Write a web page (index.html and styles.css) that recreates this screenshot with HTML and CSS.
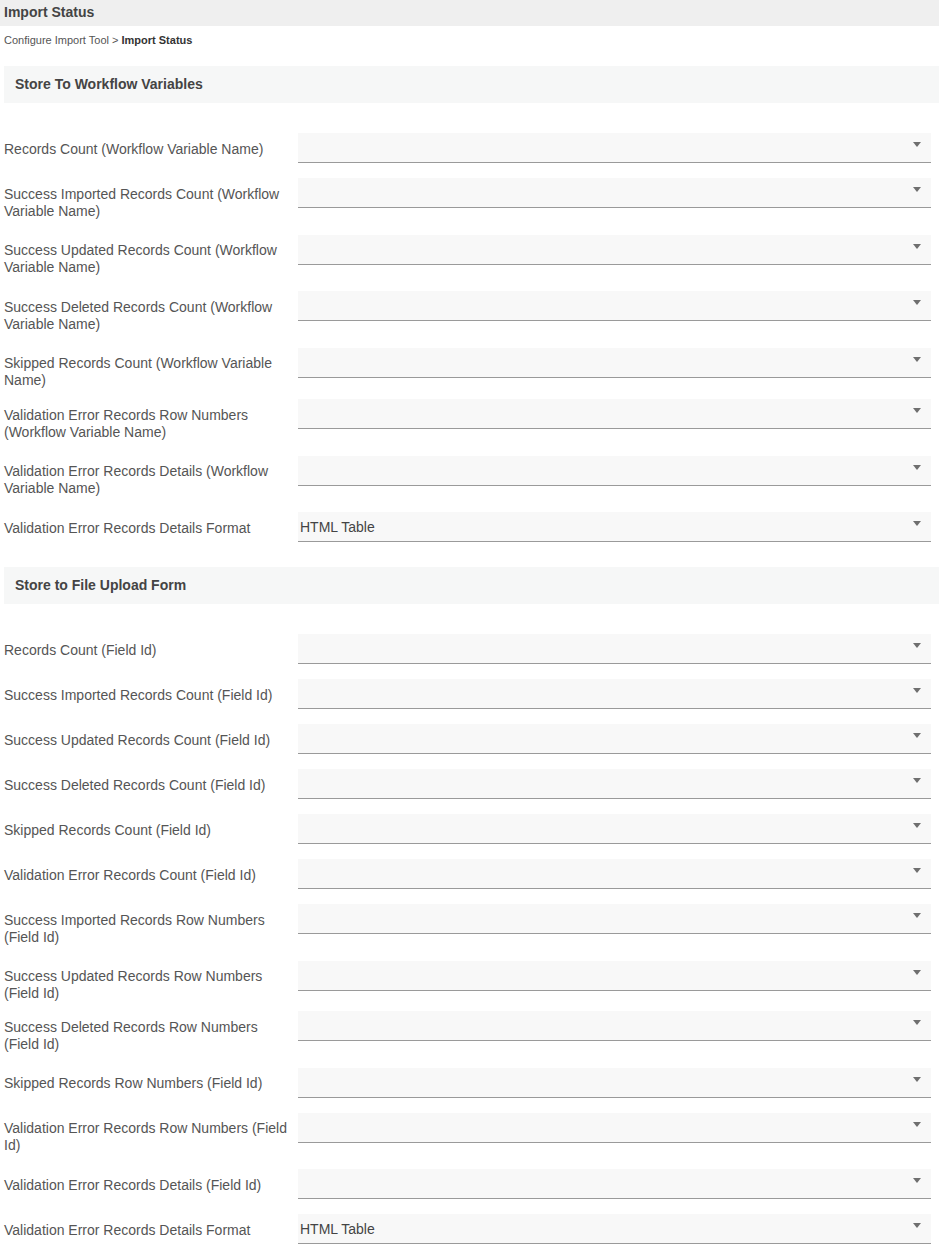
FILE: index.html
```html
<!DOCTYPE html>
<html lang="en">
<head>
    <meta charset="UTF-8">
    <meta name="viewport" content="width=device-width, initial-scale=1.0">
    <title>Import Status</title>
    <link rel="stylesheet" href="styles.css">
</head>
<body>
    <div class="page-title">Import Status</div>
    <div class="breadcrumb">Configure Import Tool &gt; <strong>Import Status</strong></div>

    <div class="section">
        <div class="section-title">Store To Workflow Variables</div>
        <div class="fields">
            <div class="field-row">
                <label class="field-label">Records Count (Workflow Variable Name)</label>
                <div class="select-wrap"><select class="select"><option></option></select></div>
            </div>
            <div class="field-row">
                <label class="field-label">Success Imported Records Count (Workflow Variable Name)</label>
                <div class="select-wrap"><select class="select"><option></option></select></div>
            </div>
            <div class="field-row">
                <label class="field-label">Success Updated Records Count (Workflow Variable Name)</label>
                <div class="select-wrap"><select class="select"><option></option></select></div>
            </div>
            <div class="field-row">
                <label class="field-label">Success Deleted Records Count (Workflow Variable Name)</label>
                <div class="select-wrap"><select class="select"><option></option></select></div>
            </div>
            <div class="field-row compact">
                <label class="field-label">Skipped Records Count (Workflow Variable Name)</label>
                <div class="select-wrap"><select class="select"><option></option></select></div>
            </div>
            <div class="field-row">
                <label class="field-label">Validation Error Records Row Numbers (Workflow Variable Name)</label>
                <div class="select-wrap"><select class="select"><option></option></select></div>
            </div>
            <div class="field-row">
                <label class="field-label">Validation Error Records Details (Workflow Variable Name)</label>
                <div class="select-wrap"><select class="select"><option></option></select></div>
            </div>
            <div class="field-row">
                <label class="field-label">Validation Error Records Details Format</label>
                <div class="select-wrap"><select class="select"><option>HTML Table</option></select></div>
            </div>
        </div>
    </div>

    <div class="section">
        <div class="section-title">Store to File Upload Form</div>
        <div class="fields">
            <div class="field-row">
                <label class="field-label">Records Count (Field Id)</label>
                <div class="select-wrap"><select class="select"><option></option></select></div>
            </div>
            <div class="field-row">
                <label class="field-label">Success Imported Records Count (Field Id)</label>
                <div class="select-wrap"><select class="select"><option></option></select></div>
            </div>
            <div class="field-row">
                <label class="field-label">Success Updated Records Count (Field Id)</label>
                <div class="select-wrap"><select class="select"><option></option></select></div>
            </div>
            <div class="field-row">
                <label class="field-label">Success Deleted Records Count (Field Id)</label>
                <div class="select-wrap"><select class="select"><option></option></select></div>
            </div>
            <div class="field-row">
                <label class="field-label">Skipped Records Count (Field Id)</label>
                <div class="select-wrap"><select class="select"><option></option></select></div>
            </div>
            <div class="field-row">
                <label class="field-label">Validation Error Records Count (Field Id)</label>
                <div class="select-wrap"><select class="select"><option></option></select></div>
            </div>
            <div class="field-row">
                <label class="field-label">Success Imported Records Row Numbers (Field Id)</label>
                <div class="select-wrap"><select class="select"><option></option></select></div>
            </div>
            <div class="field-row tight">
                <label class="field-label">Success Updated Records Row Numbers (Field Id)</label>
                <div class="select-wrap"><select class="select"><option></option></select></div>
            </div>
            <div class="field-row">
                <label class="field-label">Success Deleted Records Row Numbers (Field Id)</label>
                <div class="select-wrap"><select class="select"><option></option></select></div>
            </div>
            <div class="field-row">
                <label class="field-label">Skipped Records Row Numbers (Field Id)</label>
                <div class="select-wrap"><select class="select"><option></option></select></div>
            </div>
            <div class="field-row">
                <label class="field-label">Validation Error Records Row Numbers (Field Id)</label>
                <div class="select-wrap"><select class="select"><option></option></select></div>
            </div>
            <div class="field-row">
                <label class="field-label">Validation Error Records Details (Field Id)</label>
                <div class="select-wrap"><select class="select"><option></option></select></div>
            </div>
            <div class="field-row">
                <label class="field-label">Validation Error Records Details Format</label>
                <div class="select-wrap"><select class="select"><option>HTML Table</option></select></div>
            </div>
        </div>
    </div>
</body>
</html>
```

FILE: styles.css
```css
body {
    margin: 0;
    font-family: 'Liberation Sans', Arial, sans-serif;
    font-size: 14px;
    color: #555;
    background: #fff;
}

.page-title {
    height: 26px;
    line-height: 25px;
    padding: 0 4px;
    background: #efefef;
    font-weight: bold;
    color: #444;
}

.breadcrumb {
    margin-top: 7px;
    padding: 0 4px;
    font-size: 11px;
    line-height: 14px;
    color: #555;
}

.breadcrumb strong {
    color: #333;
}

.section {
    margin-top: 19px;
}

.section + .section {
    margin-top: 0;
}

.section-title {
    margin-left: 4px;
    height: 37px;
    line-height: 37px;
    padding: 0 11px;
    background: #f6f7f7;
    font-weight: bold;
    color: #444;
}

.fields {
    padding: 30px 8px 10px 4px;
}

.field-row {
    display: flex;
    align-items: flex-start;
    margin-bottom: 15px;
}

.field-row.compact {
    margin-bottom: 10px;
}

.field-row.tight {
    margin-bottom: 9px;
}

.field-label {
    width: 294px;
    flex-shrink: 0;
    box-sizing: border-box;
    padding: 7.5px 4px 0 0;
    line-height: 17px;
}

.select-wrap {
    position: relative;
    flex: 1;
}

.select-wrap::after {
    content: '';
    position: absolute;
    top: 9px;
    right: 10px;
    border-left: 4px solid transparent;
    border-right: 4px solid transparent;
    border-top: 5px solid #6f6f6f;
    pointer-events: none;
}

.select {
    display: block;
    width: 100%;
    height: 30px;
    box-sizing: border-box;
    margin: 0;
    padding: 0 20px 0 2px;
    -webkit-appearance: none;
    appearance: none;
    border: none;
    border-bottom: 1px solid #9a9a9a;
    border-radius: 0;
    background: #f8f8f8;
    font-family: 'Liberation Sans', Arial, sans-serif;
    font-size: 14px;
    color: #444;
    outline: none;
}
```
